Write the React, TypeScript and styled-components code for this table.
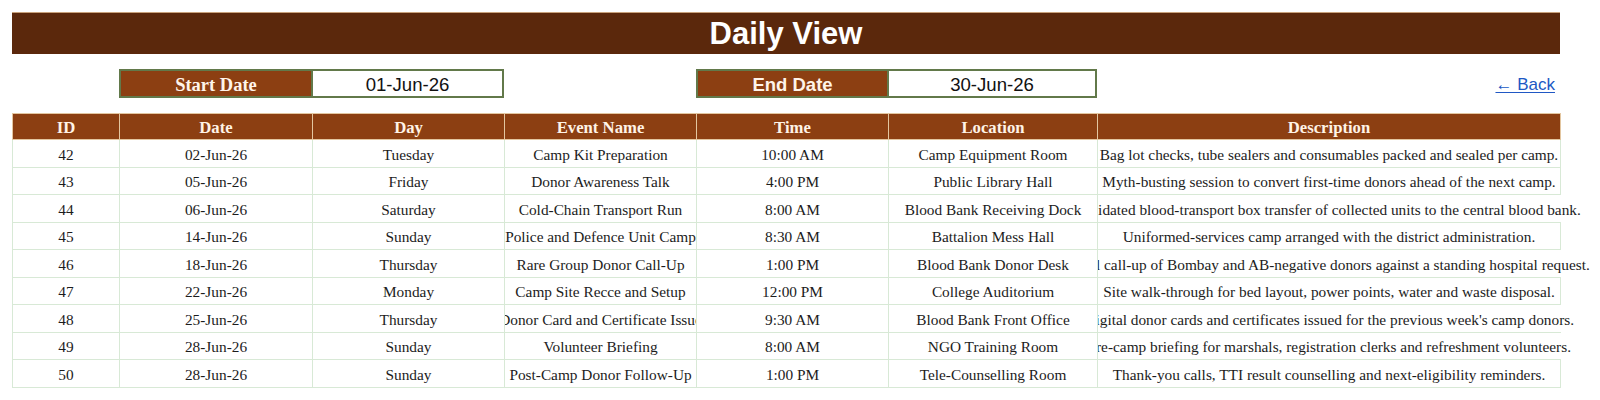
import React from "react";
import styled, { createGlobalStyle } from "styled-components";

const GlobalStyle = createGlobalStyle`
  html, body { margin: 0; padding: 0; background: #ffffff; }
  body { font-family: "Liberation Serif", "Times New Roman", serif; }
`;

const COLS = [107, 193, 192, 192, 192, 209, 463];
const GRID = COLS.map((c) => `${c}px`).join(" ");
const TOTAL = COLS.reduce((a, b) => a + b, 0);

const Page = styled.div`
  padding: 12px 0 0 12px;
  width: ${TOTAL}px;
`;

const TitleBar = styled.h1`
  margin: 0;
  height: 42px;
  background: #5b280c;
  border-top: 1px solid #c9a27c;
  box-sizing: border-box;
  display: flex;
  align-items: center;
  justify-content: center;
  color: #ffffff;
  font-family: "Liberation Sans", Arial, sans-serif;
  font-weight: 700;
  font-size: 31px;
`;

const FilterRow = styled.div`
  display: grid;
  grid-template-columns: ${GRID};
  height: 29px;
  margin-top: 15px;
  margin-bottom: 15px;
`;

const DateLabel = styled.div<{ $col: number; $sans?: boolean }>`
  grid-column: ${(p) => p.$col};
  background: #8c3f12;
  border: 2px solid #62794a;
  border-right-width: 1px;
  box-sizing: border-box;
  display: flex;
  align-items: center;
  justify-content: center;
  padding-top: 3px;
  color: #fff4ea;
  font-weight: 700;
  font-size: 18.5px;
  font-family: ${(p) =>
    p.$sans
      ? `"Liberation Sans", Arial, sans-serif`
      : `"Liberation Serif", "Times New Roman", serif`};
`;

const DateValue = styled.div<{ $col: number }>`
  grid-column: ${(p) => p.$col};
  background: #ffffff;
  border: 2px solid #62794a;
  border-left-width: 1px;
  box-sizing: border-box;
  display: flex;
  align-items: center;
  justify-content: center;
  padding-top: 3px;
  color: #111;
  font-family: "Liberation Sans", Arial, sans-serif;
  font-size: 18.6px;
`;

const BackCell = styled.div`
  grid-column: 7;
  display: flex;
  align-items: center;
  justify-content: flex-end;
  padding: 3px 5px 0 0;
`;

const BackLink = styled.a`
  color: #2058c4;
  font-family: "Liberation Sans", Arial, sans-serif;
  font-size: 17px;
  text-decoration: underline;
  text-underline-offset: 2px;
  cursor: pointer;
`;

const Table = styled.table`
  border-collapse: collapse;
  table-layout: fixed;
  width: ${TOTAL}px;
`;

const HeadRow = styled.tr`
  height: 26px;
`;

const HeadCell = styled.th`
  padding: 2px 0 0 0;
  background: #8c3f12;
  color: #fff3e6;
  font-weight: 700;
  font-size: 16.7px;
  border: 1px solid #e3c6a0;
  text-align: center;
`;

const Row = styled.tr`
  height: 27.5px;
`;

const Cell = styled.td<{ $spill?: boolean }>`
  padding: 3px 0 0 0;
  border: 1px solid #d8e9d6;
  ${(p) => (p.$spill ? "border-right: none;" : "")}
  overflow: ${(p) => (p.$spill ? "visible" : "hidden")};
  font-size: 15.33px;
  color: #1c1c1c;
`;

const CellText = styled.div<{ $spill?: boolean }>`
  display: flex;
  justify-content: center;
  align-items: center;
  white-space: nowrap;
  ${(p) => (p.$spill ? "clip-path: inset(-4px -400px -4px 0);" : "overflow: hidden;")}
`;

type Ev = {
  id: number;
  date: string;
  day: string;
  name: string;
  time: string;
  loc: string;
  desc: string;
  spill?: boolean;
};

const EVENTS: Ev[] = [
  { id: 42, date: "02-Jun-26", day: "Tuesday", name: "Camp Kit Preparation", time: "10:00 AM", loc: "Camp Equipment Room", desc: "Bag lot checks, tube sealers and consumables packed and sealed per camp." },
  { id: 43, date: "05-Jun-26", day: "Friday", name: "Donor Awareness Talk", time: "4:00 PM", loc: "Public Library Hall", desc: "Myth-busting session to convert first-time donors ahead of the next camp." },
  { id: 44, date: "06-Jun-26", day: "Saturday", name: "Cold-Chain Transport Run", time: "8:00 AM", loc: "Blood Bank Receiving Dock", desc: "Validated blood-transport box transfer of collected units to the central blood bank.", spill: true },
  { id: 45, date: "14-Jun-26", day: "Sunday", name: "Police and Defence Unit Camp", time: "8:30 AM", loc: "Battalion Mess Hall", desc: "Uniformed-services camp arranged with the district administration." },
  { id: 46, date: "18-Jun-26", day: "Thursday", name: "Rare Group Donor Call-Up", time: "1:00 PM", loc: "Blood Bank Donor Desk", desc: "Final call-up of Bombay and AB-negative donors against a standing hospital request.", spill: true },
  { id: 47, date: "22-Jun-26", day: "Monday", name: "Camp Site Recce and Setup", time: "12:00 PM", loc: "College Auditorium", desc: "Site walk-through for bed layout, power points, water and waste disposal." },
  { id: 48, date: "25-Jun-26", day: "Thursday", name: "Donor Card and Certificate Issue", time: "9:30 AM", loc: "Blood Bank Front Office", desc: "Digital donor cards and certificates issued for the previous week's camp donors.", spill: true },
  { id: 49, date: "28-Jun-26", day: "Sunday", name: "Volunteer Briefing", time: "8:00 AM", loc: "NGO Training Room", desc: "Pre-camp briefing for marshals, registration clerks and refreshment volunteers.", spill: true },
  { id: 50, date: "28-Jun-26", day: "Sunday", name: "Post-Camp Donor Follow-Up", time: "1:00 PM", loc: "Tele-Counselling Room", desc: "Thank-you calls, TTI result counselling and next-eligibility reminders." },
];

const HEADERS = ["ID", "Date", "Day", "Event Name", "Time", "Location", "Description"];

export default function App() {
  return (
    <>
      <GlobalStyle />
      <Page>
        <TitleBar>Daily View</TitleBar>
        <FilterRow>
          <DateLabel $col={2}>Start Date</DateLabel>
          <DateValue $col={3}>01-Jun-26</DateValue>
          <DateLabel $col={5} $sans>End Date</DateLabel>
          <DateValue $col={6}>30-Jun-26</DateValue>
          <BackCell>
            <BackLink>← Back</BackLink>
          </BackCell>
        </FilterRow>
        <Table>
          <colgroup>
            {COLS.map((w, i) => (
              <col key={i} style={{ width: w }} />
            ))}
          </colgroup>
          <thead>
            <HeadRow>
              {HEADERS.map((h) => (
                <HeadCell key={h}>{h}</HeadCell>
              ))}
            </HeadRow>
          </thead>
          <tbody>
            {EVENTS.map((e) => (
              <Row key={e.id}>
                <Cell><CellText>{e.id}</CellText></Cell>
                <Cell><CellText>{e.date}</CellText></Cell>
                <Cell><CellText>{e.day}</CellText></Cell>
                <Cell><CellText>{e.name}</CellText></Cell>
                <Cell><CellText>{e.time}</CellText></Cell>
                <Cell><CellText>{e.loc}</CellText></Cell>
                <Cell $spill={e.spill}>
                  <CellText $spill={e.spill}>{e.desc}</CellText>
                </Cell>
              </Row>
            ))}
          </tbody>
        </Table>
      </Page>
    </>
  );
}
